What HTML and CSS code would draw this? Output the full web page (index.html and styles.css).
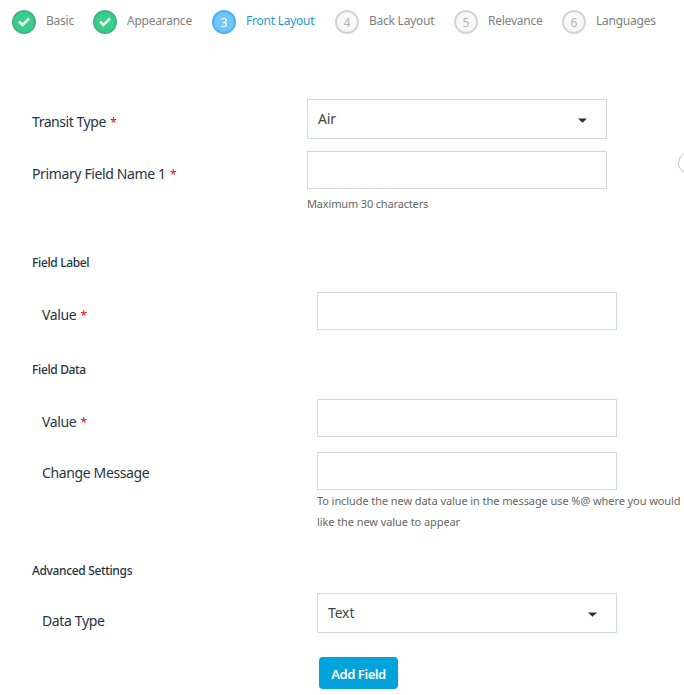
FILE: index.html
```html
<!DOCTYPE html>
<html lang="en">
<head>
<meta charset="utf-8">
<title>Front Layout</title>
<link rel="stylesheet" href="styles.css">
</head>
<body>
<nav class="steps">
  <div class="step done"><span class="dot"><svg width="14" height="12" viewBox="0 0 14 12"><path d="M2 5.5 5.5 9 12 2.5"/></svg></span><span class="name">Basic</span></div>
  <div class="step done"><span class="dot"><svg width="14" height="12" viewBox="0 0 14 12"><path d="M2 5.5 5.5 9 12 2.5"/></svg></span><span class="name">Appearance</span></div>
  <div class="step active"><span class="dot">3</span><span class="name">Front Layout</span></div>
  <div class="step"><span class="dot">4</span><span class="name">Back Layout</span></div>
  <div class="step"><span class="dot">5</span><span class="name">Relevance</span></div>
  <div class="step"><span class="dot">6</span><span class="name">Languages</span></div>
</nav>
<main class="form">
  <div class="row">
    <label class="label"><span class="transit">Transit Type</span> <b class="req">*</b></label>
    <div class="select"><span>Air</span><svg class="caret" width="10" height="5" viewBox="0 0 10 5"><path d="M0 0.5h9L4.5 4.8z"/></svg></div>
  </div>
  <div class="row primary">
    <label class="label"><span>Primary Field Name 1</span> <b class="req">*</b></label>
    <div class="field"><input class="input" type="text"><p class="hint max">Maximum 30 characters</p></div>
    <span class="option"></span>
  </div>
  <h3 class="heading field-label">Field Label</h3>
  <div class="row inset">
    <label class="label"><span>Value</span> <b class="req">*</b></label>
    <input class="input" type="text">
  </div>
  <h3 class="heading field-data">Field Data</h3>
  <div class="row inset">
    <label class="label"><span>Value</span> <b class="req">*</b></label>
    <input class="input" type="text">
  </div>
  <div class="row inset message">
    <label class="label"><span>Change Message</span></label>
    <div class="field"><input class="input" type="text"><p class="hint long">To include the new data value in the message use %@ where you would<br>like the new value to appear</p></div>
  </div>
  <h3 class="heading advanced">Advanced Settings</h3>
  <div class="row inset type">
    <label class="label"><span>Data Type</span></label>
    <div class="select"><span>Text</span><svg class="caret" width="10" height="5" viewBox="0 0 10 5"><path d="M0 0.5h9L4.5 4.8z"/></svg></div>
  </div>
  <button class="button" type="button">Add Field</button>
</main>
</body>
</html>
```
FILE: styles.css
```css
* { box-sizing: border-box; }
body {
  margin: 0;
  width: 684px;
  height: 695px;
  overflow: hidden;
  background: #fff;
  color: #27333f;
  font: 14px/20px "Noto Sans", sans-serif;
}
.steps {
  display: grid;
  grid-template-columns: 81px 119px 123px 119px 108px 110px;
  padding: 10px 0 0 12px;
  height: 99px;
}
.step { display: flex; gap: 10px; height: 24px; color: #808080; font-size: 12px; white-space: nowrap; }
.name { line-height: 22px; letter-spacing: -0.24px; }
.dot {
  display: flex;
  flex: none;
  align-items: center;
  justify-content: center;
  width: 24px;
  height: 24px;
  border: 2px solid #d4d4d4;
  border-radius: 50%;
  background: #f8f8f8;
  color: #b5b5b5;
  line-height: 20px;
  padding-top: 1px;
}
.done .dot { padding: 0; background: #36d08a; border-color: #45b580; }
.dot svg { fill: none; stroke: #fff; stroke-width: 2.6; }
.active .dot { background: #70c5fb; border-color: #4db2f2; color: #fff; }
.active .name { color: #1a9cd8; }
.form { padding-left: 32px; }
.row { display: flex; align-items: flex-start; }
.inset { padding-left: 10px; }
.label { flex: none; width: 275px; padding-top: 13px; white-space: nowrap; letter-spacing: -0.37px; }
.transit { letter-spacing: -0.45px; }
.req { margin-left: 1px; color: #f00; font-size: 12px; font-weight: 400; }
.select, .input {
  flex: none;
  width: 300px;
  border: 1px solid #d1d8de;
  background: #fff;
  border-radius: 0;
}
.select {
  display: flex;
  align-items: center;
  justify-content: space-between;
  height: 40px;
  padding: 0 18px 0 10px;
  color: #444;
  letter-spacing: -0.15px;
}
.caret { fill: #27333f; margin-top: 2px; }
.input { display: block; height: 38px; padding: 0 10px; }
.field { width: 300px; flex: none; }
.primary { margin-top: 12px; height: 66px; }
.hint { margin: 0; color: #666; font-size: 11px; line-height: 21px; white-space: nowrap; }
.max { padding-top: 4px; letter-spacing: -0.16px; }
.long { letter-spacing: -0.08px; }
.option {
  flex: none;
  width: 22px;
  height: 22px;
  margin: 1px 0 0 71px;
  border: 1px solid #c4c4c4;
  border-radius: 50%;
}
.heading { margin: 0; font-size: 12px; font-weight: 500; line-height: 20px; letter-spacing: -0.35px; white-space: nowrap; }
.field-label { margin: 36px 0 19px; }
.field-data { margin: 30px 0 19px; }
.message { margin-top: 15px; height: 80px; }
.message .label { padding-top: 11px; }
.advanced { margin: 29px 0 12px; }
.type .label { padding-top: 18px; }
.button {
  display: block;
  width: 79px;
  height: 32px;
  margin: 24px 0 0 287px;
  padding: 2px 0 0;
  border: 0;
  border-radius: 4px;
  background: #02a3da;
  color: #fff;
  font: 600 13px/20px "Noto Sans", sans-serif;
  letter-spacing: -0.45px;
  white-space: nowrap;
}
```
